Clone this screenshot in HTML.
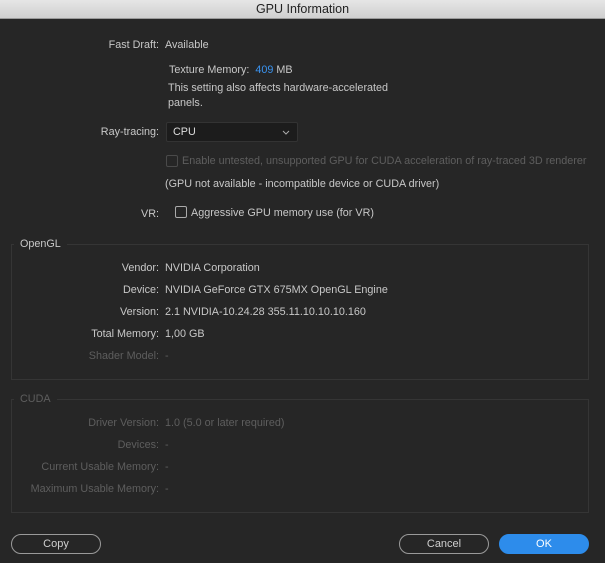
<!DOCTYPE html>
<html><head><style>
*{margin:0;padding:0;box-sizing:border-box}
body{width:605px;height:563px;background:#262626;font-family:"Liberation Sans",sans-serif;font-size:10.8px;color:#c8c8c8;position:relative;overflow:hidden}
.t{position:absolute;white-space:nowrap;line-height:12px}
.l{position:absolute;right:446px;white-space:nowrap;line-height:12px;text-align:right}
.d{color:#5e5e5e}
.title{position:absolute;left:0;top:0;width:605px;height:19px;background:linear-gradient(#e6e6e6,#cfcfcf);border-bottom:1px solid #9a9a9a;color:#222;font-size:12.5px;text-align:center;line-height:19px}
.box{position:absolute;left:11px;width:578px;border:1px solid #353535}
.bt{position:absolute;background:#262626;padding:0 6px;line-height:12px}
.cb{position:absolute;width:12px;height:12px;border:1px solid #aaa;border-radius:2px}
.btn{position:absolute;top:534px;height:20px;border:1.5px solid #9a9a9a;border-radius:10px;display:flex;align-items:center;justify-content:center;font-size:11px;color:#cfcfcf}
</style></head><body>
<div class="title">GPU Information</div>
<div class="l" style="top:39px">Fast Draft:</div><div class="t" style="left:165px;top:39px">Available</div>
<div class="t" style="left:169px;top:64px">Texture Memory:&nbsp; <span style="color:#3a93f0">409</span> MB</div>
<div class="t" style="left:168px;top:82px">This setting also affects hardware-accelerated</div>
<div class="t" style="left:168px;top:97px">panels.</div>
<div class="l" style="top:126px">Ray-tracing:</div>
<div style="position:absolute;left:166px;top:122px;width:132px;height:20px;background:#1c1c1c;border:1px solid #333;border-radius:2px"><span class="t" style="left:6px;top:3px;color:#ddd">CPU</span><svg style="position:absolute;right:7px;top:7px" width="8" height="5"><path d="M1 1L4 4L7 1" stroke="#aaa" fill="none"/></svg></div>
<div class="cb" style="left:166px;top:155px;border-color:#4a4a4a"></div>
<div class="t d" style="left:182px;top:155px">Enable untested, unsupported GPU for CUDA acceleration of ray-traced 3D renderer</div>
<div class="t" style="left:165px;top:178px">(GPU not available - incompatible device or CUDA driver)</div>
<div class="l" style="top:208px">VR:</div>
<div class="cb" style="left:175px;top:206px"></div>
<div class="t" style="left:191px;top:207px">Aggressive GPU memory use (for VR)</div>

<div class="box" style="top:244px;height:136px"></div>
<div class="bt" style="left:14px;top:238px">OpenGL</div>
<div class="l" style="top:262px">Vendor:</div><div class="t" style="left:165px;top:262px">NVIDIA Corporation</div>
<div class="l" style="top:284px">Device:</div><div class="t" style="left:165px;top:284px">NVIDIA GeForce GTX 675MX OpenGL Engine</div>
<div class="l" style="top:306px">Version:</div><div class="t" style="left:165px;top:306px">2.1 NVIDIA-10.24.28 355.11.10.10.10.160</div>
<div class="l" style="top:328px">Total Memory:</div><div class="t" style="left:165px;top:328px">1,00 GB</div>
<div class="l d" style="top:350px">Shader Model:</div><div class="t d" style="left:165px;top:350px">-</div>

<div class="box" style="top:399px;height:114px"></div>
<div class="bt d" style="left:14px;top:393px">CUDA</div>
<div class="l d" style="top:417px">Driver Version:</div><div class="t d" style="left:165px;top:417px">1.0 (5.0 or later required)</div>
<div class="l d" style="top:439px">Devices:</div><div class="t d" style="left:165px;top:439px">-</div>
<div class="l d" style="top:461px">Current Usable Memory:</div><div class="t d" style="left:165px;top:461px">-</div>
<div class="l d" style="top:483px">Maximum Usable Memory:</div><div class="t d" style="left:165px;top:483px">-</div>

<div class="btn" style="left:11px;width:90px">Copy</div>
<div class="btn" style="left:399px;width:90px">Cancel</div>
<div class="btn" style="left:499px;width:90px;background:#2d8ceb;border-color:#2d8ceb;color:#fff">OK</div>
</body></html>
